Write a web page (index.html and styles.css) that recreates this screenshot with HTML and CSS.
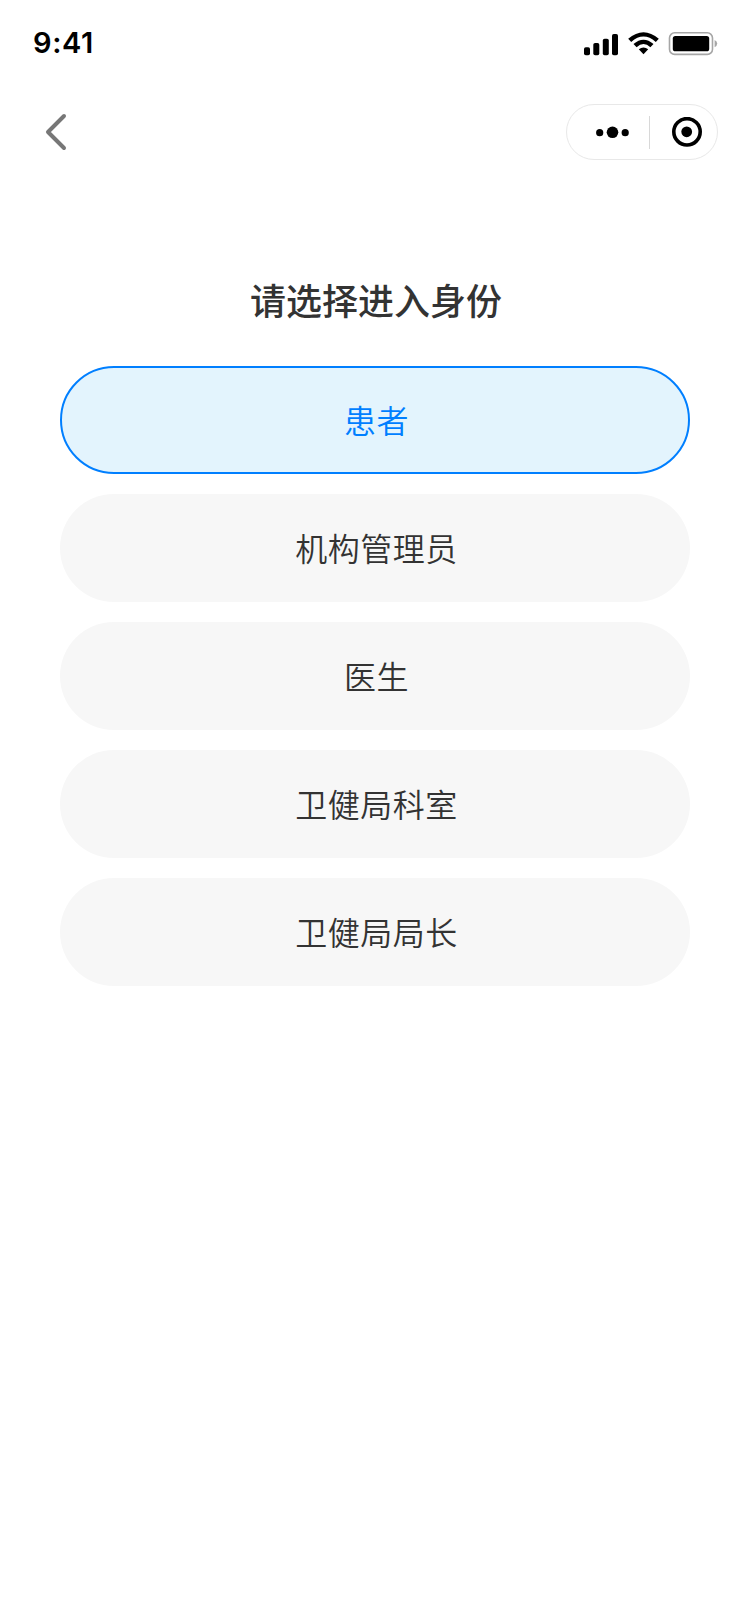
FILE: index.html
```html
<!DOCTYPE html>
<html lang="zh-CN">
<head>
<meta charset="utf-8">
<title>请选择进入身份</title>
<link rel="stylesheet" href="styles.css">
</head>
<body>
<header class="status-bar">
  <span class="time">9:41</span>
  <svg class="status-icons" width="134" height="24" viewBox="584 32 134 24" aria-hidden="true">
    <rect x="584" y="47.3" width="6" height="8" rx="1.8"/>
    <rect x="593.3" y="43" width="6" height="12.3" rx="1.8"/>
    <rect x="602.8" y="38.7" width="6" height="16.6" rx="1.8"/>
    <rect x="612" y="34" width="6" height="21.3" rx="1.8"/>
    <path d="M628.2 38.8Q643.5 25.6 658.8 38.8L655.8 41.9Q643.5 31.2 631.2 41.9Z"/>
    <path d="M633.5 44.1Q643.5 35.3 653.5 44.1L650.4 47.2Q643.5 41 636.6 47.2Z"/>
    <path d="M638.8 49.3Q643.5 45.5 648.2 49.3L643.5 54.2Z"/>
    <rect class="battery-case" x="669.5" y="32.8" width="43" height="21.6" rx="5.2"/>
    <rect x="672.8" y="36" width="36.4" height="15.3" rx="2.6"/>
    <path class="battery-tip" d="M714.6 39.9Q717.2 41 717.2 43.6Q717.2 46.2 714.6 47.3Z"/>
  </svg>
</header>
<nav class="nav-bar">
  <svg class="back" width="24" height="40" viewBox="0 0 24 40" aria-label="返回">
    <path d="M20 4L4 20L20 36"/>
  </svg>
  <div class="capsule">
    <svg class="more" width="34" height="14" viewBox="0 0 34 14" aria-hidden="true">
      <circle cx="4.7" cy="7.7" r="3.6"/><circle cx="17.5" cy="7.3" r="5.8"/><circle cx="30.2" cy="7.7" r="3.6"/>
    </svg>
    <span class="divider"></span>
    <svg class="close" width="30" height="30" viewBox="0 0 30 30" aria-hidden="true">
      <circle class="ring" cx="15" cy="14.8" r="13.2"/><circle cx="14.7" cy="14.8" r="5.4"/>
    </svg>
  </div>
</nav>
<main class="content">
  <h1 class="title">请选择进入身份</h1>
  <div class="roles">
    <button class="role role-selected">患者</button>
    <button class="role">机构管理员</button>
    <button class="role">医生</button>
    <button class="role">卫健局科室</button>
    <button class="role">卫健局局长</button>
  </div>
</main>
</body>
</html>
```
FILE: styles.css
```css
* { box-sizing: border-box; }
body {
  margin: 0;
  min-height: 1624px;
  background: #fff;
  color: #333;
  font-family: "Noto Sans CJK SC", sans-serif;
}
.status-bar {
  display: flex;
  justify-content: space-between;
  align-items: flex-start;
  height: 88px;
  padding: 32px 32px 0 33px;
}
.time {
  color: #000;
  font: 600 29px/22px Inter, sans-serif;
  letter-spacing: 0.6px;
}
.status-icons { display: block; }
.battery-case { fill: none; stroke: #a6a6a6; stroke-width: 1.6; }
.battery-tip { fill: #a6a6a6; }
.nav-bar {
  display: flex;
  justify-content: space-between;
  align-items: center;
  height: 88px;
  padding: 0 32px 0 44px;
}
.back path {
  fill: none;
  stroke: #777;
  stroke-width: 4;
  stroke-linecap: round;
  stroke-linejoin: round;
}
.capsule {
  display: flex;
  align-items: center;
  width: 152px;
  height: 56px;
  padding-left: 28px;
  border: 1px solid #e8e8e8;
  border-radius: 28px;
}
.more { margin-right: 20px; }
.divider { width: 1px; height: 33px; background: #d8d8d8; }
.close { margin-left: 22px; }
.ring { fill: none; stroke: #000; stroke-width: 3.6; }
.content { padding: 98px 60px 0; }
.title {
  margin: 0 0 42px;
  padding-left: 2px;
  text-align: center;
  font-size: 36px;
  font-weight: 500;
  line-height: 50px;
}
.roles { display: flex; flex-direction: column; gap: 20px; }
.role {
  height: 108px;
  padding: 0 0 2px 3px;
  border: 0;
  border-radius: 54px;
  background: #f7f7f7;
  color: #333;
  font: 350 32px/48px "Noto Sans CJK SC", sans-serif;
  letter-spacing: 0.5px;
}
.role-selected {
  border: 2px solid #007fff;
  background: #e3f4fd;
  color: #007fff;
}
```
